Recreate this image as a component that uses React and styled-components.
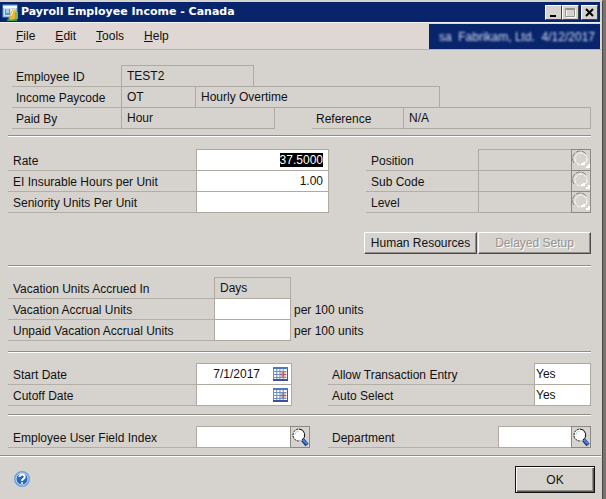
import React, { useEffect, useRef } from "react";
import styled, { createGlobalStyle, css } from "styled-components";

const GlobalStyle = createGlobalStyle`
  * { box-sizing: border-box; }
  body { margin: 0; background: #77736f; }
  body, button, input, select {
    font-family: "Liberation Sans", Arial, sans-serif;
    font-size: 12px;
    color: #111;
  }
`;

const Window = styled.div`
  display: flex;
  flex-direction: column;
  min-height: 100vh;
  margin-right: 3px;
  background: #d6d3ce;
  border-top: 1px solid #d6d3ce;
  border-right: 1px solid #4a4846;
`;

const TitleBar = styled.header`
  display: flex;
  align-items: center;
  gap: 2px;
  height: 20px;
  margin: 1px 2px 0 0;
  padding: 0 2px;
  background: #08246b;
`;

const Title = styled.h1`
  flex: 1;
  margin: 0;
  color: #fff;
  font: bold 11px/20px "DejaVu Sans", sans-serif;
  white-space: nowrap;
`;

const WindowButtons = styled.div`
  display: flex;
`;

const WindowButton = styled.button`
  display: grid;
  place-items: center;
  width: 17px;
  height: 15px;
  padding: 0;
  margin-left: ${(p) => (p.$apart ? "2px" : "0")};
  background: #d6d3ce;
  border: 1px solid;
  border-color: #fff #404040 #404040 #fff;
`;

const MenuBar = styled.div`
  display: flex;
  justify-content: space-between;
  height: 28px;
  margin-right: 1px;
  padding: 1px 1px 0 0;
  border-top: 1px solid #f4f2f0;
  border-bottom: 1px solid #b4b0ab;
  background: #ded7d3;
`;

const Menus = styled.nav`
  display: flex;
  gap: 20px;
  padding-left: 16px;
`;

const MenuButton = styled.button`
  padding: 0 0 2px;
  border: 0;
  background: none;
  &::first-letter { text-decoration: underline; }
`;

const Company = styled.div`
  width: 171px;
  padding: 0 5px;
  background: #08246b;
  color: #d5dcf2;
  line-height: 26px;
  text-align: right;
  white-space: pre;
  overflow: hidden;
`;

const Blurred = styled.span`
  filter: blur(1px);
`;

const Section = styled.section`
  display: flex;
  justify-content: space-between;
  align-items: flex-start;
  margin: 0 11px 0 8px;
  padding: ${(p) => p.$pad};
  border-bottom: ${(p) => (p.$last ? "0" : "1px solid #fff")};
  box-shadow: ${(p) => (p.$last ? "none" : "inset 0 -1px #918e8a")};
`;

const Stack = styled.div`
  display: flex;
  flex-direction: column;
  width: ${(p) => p.$w || "auto"};
`;

const Row = styled.div`
  display: flex;
  height: 21px;
`;

const Label = styled.label`
  width: ${(p) => p.$w};
  height: 21px;
  padding-left: ${(p) => p.$pad || "5px"};
  border-bottom: 1px solid #b3afa6;
  line-height: 22px;
  white-space: nowrap;
`;

const cell = css`
  height: 22px;
  margin: -1px -1px 0 0;
  border: 1px solid #aeaaa1;
  border-radius: 0;
  outline: 0;
  &:last-child { margin-right: 0; }
`;

const Field = styled.input`
  ${cell}
  width: ${(p) => p.$w};
  min-width: 0;
  padding: 0 5px;
  background: ${(p) => (p.readOnly || p.disabled ? "transparent" : "#fff")};
  text-align: ${(p) => p.$align || "left"};
  &::selection { background: #000; color: #fff; }
`;

const Choice = styled.select`
  ${cell}
  width: 57px;
  padding: 0 1px;
  background: #fff;
  appearance: none;
`;

const DateBox = styled.div`
  ${cell}
  display: flex;
  align-items: center;
  width: 96px;
  padding-right: 3px;
  background: #fff;
`;

const DateInput = styled.input`
  flex: 1;
  min-width: 0;
  padding: 0 13px 0 0;
  border: 0;
  outline: 0;
  background: none;
  text-align: right;
`;

const IconButton = styled.button`
  display: grid;
  place-items: center;
  padding: 0;
  border: 0;
  background: none;
`;

const LookupButton = styled(IconButton)`
  ${cell}
  position: relative;
  width: 20px;
  border-color: #8c8985;
`;

const Spacer = styled.div`
  flex: 1;
`;

const Suffix = styled.span`
  padding-left: 4px;
  line-height: 22px;
`;

const ButtonPair = styled.div`
  display: grid;
  grid-template-columns: 1fr 1fr;
  gap: 1px;
  margin: 19px 0 0 -2px;
`;

const PushButton = styled.button`
  height: 22px;
  padding: 0;
  background: #d6d3ce;
  border: 1px solid;
  border-color: #fff #4c4a48 #4c4a48 #fff;
  box-shadow: inset -1px -1px #918e8a;
  white-space: nowrap;
  &:disabled { color: #96938e; text-shadow: 1px 1px #fff; }
`;

const Footer = styled.footer`
  display: flex;
  flex: 1;
  justify-content: space-between;
  align-items: flex-start;
  margin-right: 1px;
  padding: 10px 6px 6px 14px;
  border-top: 1px solid #918e8a;
  box-shadow: inset 0 1px #fff;
`;

const HelpButton = styled(IconButton)`
  margin-top: 5px;
`;

const OkButton = styled(PushButton)`
  width: 80px;
  height: 27px;
  border: 1px solid #111;
  box-shadow: inset 1px 1px #fff, inset -1px -1px #5a5856, inset -2px -2px #918e8a;
`;

const FormIcon = () => (
  <svg width="17" height="18" viewBox="0 0 17 18" aria-hidden="true">
    <rect x="1" y="2" width="14" height="12" fill="#c9e1f8" stroke="#629ad6" />
    <path d="M1 4h14" stroke="#efffff" strokeWidth="2" />
    <path d="M3 6h5v6H3z" fill="#5595d0" />
    <path d="M4 7h3M4 9h3" stroke="#fff" />
    <path d="M9 6h4v3H9z" fill="#f4faff" />
    <path d="M5 17l3-4 4 1 3 2v2H5z" fill="#3f9c51" />
    <path d="M7 14l2-5 2-4 3 2-1 3 2 4-2 2-5 1z" fill="#e5b83d" />
    <path d="M9 13l3-7" stroke="#fff0a0" />
    <path d="M13 9h3v7h-3z" fill="#78b95e" />
  </svg>
);

const MinimizeIcon = () => (
  <svg width="11" height="11" aria-hidden="true"><path d="M2 8h6v2H2z" /></svg>
);
const MaximizeIcon = () => (
  <svg width="13" height="11" aria-hidden="true">
    <path d="M2.500 2.500h9v8h-9z" fill="none" stroke="#fff" />
    <path d="M1.500 1.500h9v8h-9zM1 2.500h10" fill="none" stroke="#96938e" />
  </svg>
);
const CloseIcon = () => (
  <svg width="11" height="11" aria-hidden="true"><path d="M2 2l7 7M9 2l-7 7" stroke="#000" strokeWidth="2" /></svg>
);

const CalendarIcon = () => (
  <svg width="15" height="14" viewBox="0 0 14 14" preserveAspectRatio="none" aria-hidden="true">
    <path fill="#fff" d="M0 0h14v14H0z" />
    <path fill="#eab9ac" d="M7 4h5v6H7z" />
    <path d="M1 0v13M4 0v13M7 0v13M10 0v13M0 4h13M0 7h13M0 10h13" transform="translate(-.5 .5)" stroke="#6d8cca" />
    <path d="M13.500 0v14" stroke="#45599f" />
    <path d="M0 0h14v2H0z" fill="#4f78c4" />
    <path d="M0 12h14v2H0z" fill="#414f98" />
    <path d="M7 7h5v1H7zM9 5h1v5H9z" fill="#c65445" />
  </svg>
);

const Lens = ({ off }) =>
  off ? (
    <svg width="18" height="20" viewBox="0 0 18 20" aria-hidden="true">
      <circle cx="9" cy="9" r="6" fill="none" stroke="#fff" strokeWidth="1" strokeDasharray="4 1" />
      <path d="M2 13a7 7 0 0 1 12-9" fill="none" stroke="#85827e" strokeDasharray="5 1" />
      <path d="M14 17h3v-3M9 14h3v-2" fill="none" stroke="#fff" strokeWidth="2" />
    </svg>
  ) : (
    <svg width="18" height="20" viewBox="0 0 18 20" aria-hidden="true">
      <path d="M11 12l5 6" stroke="#12358c" strokeWidth="4" />
      <path d="M12 13l4 4" stroke="#4f83df" strokeWidth="2" />
      <circle cx="8" cy="8" r="6" fill="#fff" stroke="#bdbbb8" strokeWidth="1" />
      <path d="M8 2a6 6 0 0 1 3 11" fill="none" stroke="#111" strokeWidth="1" />
      <path d="M2 8a6 6 0 0 1 6-6M2 9a6 6 0 0 0 6 5" fill="none" stroke="#333" strokeDasharray="2 1" />
      <path d="M4 8a4 4 0 0 1 4-4" fill="none" stroke="#c9d7ee" />
    </svg>
  );

const HelpIcon = () => (
  <svg width="16" height="16" viewBox="0 0 16 16" aria-hidden="true">
    <circle cx="8" cy="8" r="7" fill="#2869be" stroke="#6fa1dc" strokeWidth="2" />
    <circle cx="8" cy="8" r="6" fill="none" stroke="#c9e0f6" />
    <path d="M5.500 6q0-2.500 2.600-2.500T10.700 6q0 1.200-1.400 2Q8 8.700 8 10M8 11.300v1.400" fill="none" stroke="#fff" strokeWidth="2" />
  </svg>
);

const Lookup = ({ off, name }) => (
  <LookupButton type="button" disabled={off} aria-label={`Look up ${name}`}><Lens off={off} /></LookupButton>
);

const InputRow = ({ id, label, labelWidth, labelPad, suffix, lookup, inputRef, ...field }) => (
  <Row>
    <Label htmlFor={id} $w={labelWidth} $pad={labelPad}>{label}</Label>
    <Field id={id} ref={inputRef} {...field} />
    {suffix && <Suffix>{suffix}</Suffix>}
    {lookup && <Lookup name={label} off={field.disabled} />}
  </Row>
);

const DateRow = ({ id, label, value }) => (
  <Row>
    <Label htmlFor={id} $w="188px">{label}</Label>
    <DateBox>
      <DateInput id={id} defaultValue={value} />
      <IconButton type="button" aria-label={`Choose ${label}`}><CalendarIcon /></IconButton>
    </DateBox>
  </Row>
);

const ChoiceRow = ({ id, label }) => (
  <Row>
    <Label htmlFor={id} $w="206px" $pad="4px">{label}</Label>
    <Choice id={id} defaultValue="Yes"><option>Yes</option><option>No</option></Choice>
  </Row>
);

export default function App() {
  const rate = useRef(null);
  useEffect(() => {
    rate.current.focus();
    rate.current.select();
  }, []);

  return (
    <Window>
      <GlobalStyle />
      <TitleBar>
        <FormIcon />
        <Title>Payroll Employee Income - Canada</Title>
        <WindowButtons>
          <WindowButton aria-label="Minimize"><MinimizeIcon /></WindowButton>
          <WindowButton aria-label="Maximize" disabled><MaximizeIcon /></WindowButton>
          <WindowButton aria-label="Close" $apart><CloseIcon /></WindowButton>
        </WindowButtons>
      </TitleBar>
      <MenuBar>
        <Menus>
          {["File", "Edit", "Tools", "Help"].map((m) => <MenuButton key={m}>{m}</MenuButton>)}
        </Menus>
        <Company><Blurred>sa  Fabrikam, Ltd.  4/12/2017</Blurred></Company>
      </MenuBar>

      <Section $pad="16px 0 7px 4px">
        <Stack $w="100%">
          <Row>
            <Label htmlFor="employee" $w="109px" $pad="4px">Employee ID</Label>
            <Field id="employee" $w="133px" readOnly defaultValue="TEST2" />
          </Row>
          <Row>
            <Label htmlFor="paycode" $w="109px" $pad="4px">Income Paycode</Label>
            <Field id="paycode" $w="75px" readOnly defaultValue="OT" />
            <Field aria-label="Paycode description" $w="245px" readOnly defaultValue="Hourly Overtime" />
          </Row>
          <Row>
            <Label htmlFor="paidby" $w="109px" $pad="4px">Paid By</Label>
            <Field id="paidby" $w="154px" readOnly defaultValue="Hour" />
            <Spacer />
            <Label htmlFor="reference" $w="91px" $pad="4px">Reference</Label>
            <Field id="reference" $w="188px" readOnly defaultValue="N/A" />
          </Row>
        </Stack>
      </Section>

      <Section $pad="13px 0 12px">
        <Stack>
          <InputRow id="rate" inputRef={rate} label="Rate" labelWidth="188px" $w="133px" $align="right" defaultValue="37.5000" />
          <InputRow id="hours" label="EI Insurable Hours per Unit" labelWidth="188px" $w="133px" $align="right" defaultValue="1.00" />
          <InputRow id="seniority" label="Seniority Units Per Unit" labelWidth="188px" $w="133px" $align="right" />
        </Stack>
        <Stack>
          <InputRow id="position" label="Position" labelWidth="112px" $w="94px" disabled lookup />
          <InputRow id="subcode" label="Sub Code" labelWidth="112px" $w="94px" disabled lookup />
          <InputRow id="level" label="Level" labelWidth="112px" $w="94px" disabled lookup />
          <ButtonPair>
            <PushButton>Human Resources</PushButton>
            <PushButton disabled>Delayed Setup</PushButton>
          </ButtonPair>
        </Stack>
      </Section>

      <Section $pad="11px 0 11px">
        <Stack>
          <InputRow id="accrued" label="Vacation Units Accrued In" labelWidth="206px" $w="77px" readOnly defaultValue="Days" />
          <InputRow id="accrual" label="Vacation Accrual Units" labelWidth="206px" $w="77px" suffix="per 100 units" />
          <InputRow id="unpaid" label="Unpaid Vacation Accrual Units" labelWidth="206px" $w="77px" suffix="per 100 units" />
        </Stack>
      </Section>

      <Section $pad="11px 0 9px">
        <Stack>
          <DateRow id="start" label="Start Date" value="7/1/2017" />
          <DateRow id="cutoff" label="Cutoff Date" value="" />
        </Stack>
        <Stack>
          <ChoiceRow id="allow" label="Allow Transaction Entry" />
          <ChoiceRow id="auto" label="Auto Select" />
        </Stack>
      </Section>

      <Section $last $pad="11px 0 7px">
        <Stack>
          <InputRow id="index" label="Employee User Field Index" labelWidth="188px" $w="95px" lookup />
        </Stack>
        <Stack>
          <InputRow id="department" label="Department" labelWidth="170px" labelPad="4px" $w="74px" lookup />
        </Stack>
      </Section>

      <Footer>
        <HelpButton aria-label="Help"><HelpIcon /></HelpButton>
        <OkButton>OK</OkButton>
      </Footer>
    </Window>
  );
}
